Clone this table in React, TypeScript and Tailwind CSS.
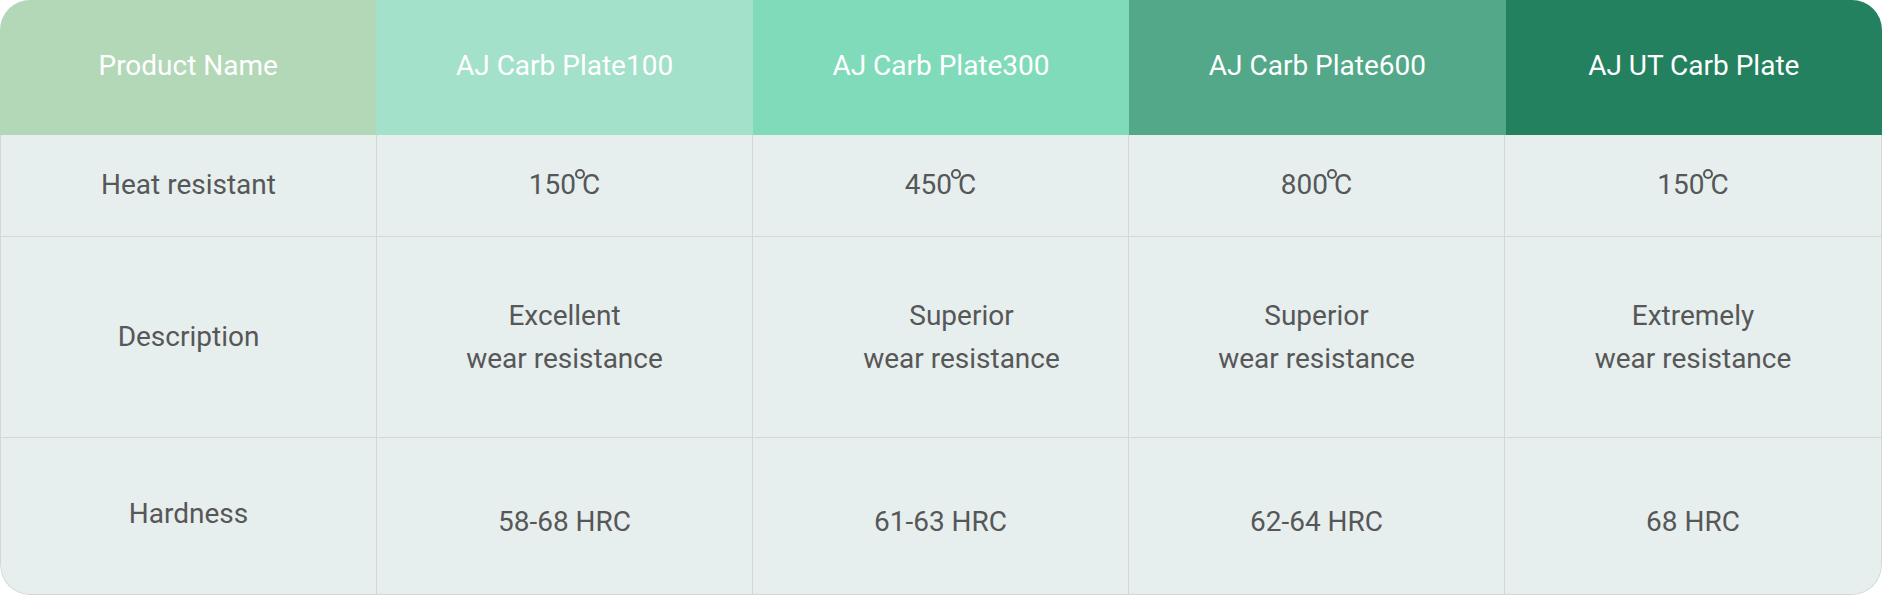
const headers = [
  { label: "Product Name", bg: "bg-[#b3d8b8]" },
  { label: "AJ Carb Plate100", bg: "bg-[#a3e1cb]" },
  { label: "AJ Carb Plate300", bg: "bg-[#80dbbb]" },
  { label: "AJ Carb Plate600", bg: "bg-[#52a888]" },
  { label: "AJ UT Carb Plate", bg: "bg-[#248160]" },
];

const heat = ["150", "450", "800", "150"];
const desc = [
  ["Excellent", "wear resistance"],
  ["Superior", "wear resistance"],
  ["Superior", "wear resistance"],
  ["Extremely", "wear resistance"],
];
const hardness = ["58-68 HRC", "61-63 HRC", "62-64 HRC", "68 HRC"];

const font = "font-['Roboto','Noto_Sans_CJK_SC',sans-serif]";

export default function App() {
  return (
    <div className={`w-[1882px] h-[595px] bg-white ${font}`}>
      <div className="overflow-hidden rounded-[30px]">
        {/* header */}
        <div className="grid h-[135px] grid-cols-5">
          {headers.map((h) => (
            <div
              key={h.label}
              className={`flex items-center justify-center pb-[3px] text-[28px] text-white ${h.bg}`}
            >
              {h.label}
            </div>
          ))}
        </div>

        {/* body */}
        <div className="rounded-b-[30px] border-x border-b border-[#d6d6d6] bg-[#e6efee] text-[28px] text-[#575757]">
          <div className="grid h-[102px] grid-cols-5 border-b border-[#d6d6d6]">
            <div className="flex items-center justify-center border-r border-[#d6d6d6] pb-[2px]">Heat resistant</div>
            {heat.map((v, i) => (
              <div
                key={i}
                className={`flex items-center justify-center pb-[2px] ${i < 3 ? "border-r border-[#d6d6d6]" : ""}`}
              >
                <span>{v}</span>
                {/* degree ring sits raised between number and C */}
                <span className="-ml-[1px] -mr-[3px] inline-block h-[10px] w-[10px] -translate-y-[11px] rounded-full border-2 border-[#575757]" />
                <span>C</span>
              </div>
            ))}
          </div>

          <div className="grid h-[201px] grid-cols-5 border-b border-[#d6d6d6]">
            <div className="flex items-center justify-center border-r border-[#d6d6d6]">Description</div>
            {desc.map((d, i) => (
              <div
                key={i}
                className={`flex flex-col items-center justify-center leading-[43px] ${i < 3 ? "border-r border-[#d6d6d6]" : ""} ${i === 1 ? "pl-[42px]" : ""}`}
              >
                <span>{d[0]}</span>
                <span>{d[1]}</span>
              </div>
            ))}
          </div>

          <div className="grid h-[156px] grid-cols-5">
            <div className="flex items-center justify-center border-r border-[#d6d6d6] pb-[4px]">Hardness</div>
            {hardness.map((v, i) => (
              <div
                key={i}
                className={`flex items-center justify-center pt-[12px] ${i < 3 ? "border-r border-[#d6d6d6]" : ""}`}
              >
                {v}
              </div>
            ))}
          </div>
        </div>
      </div>
    </div>
  );
}
